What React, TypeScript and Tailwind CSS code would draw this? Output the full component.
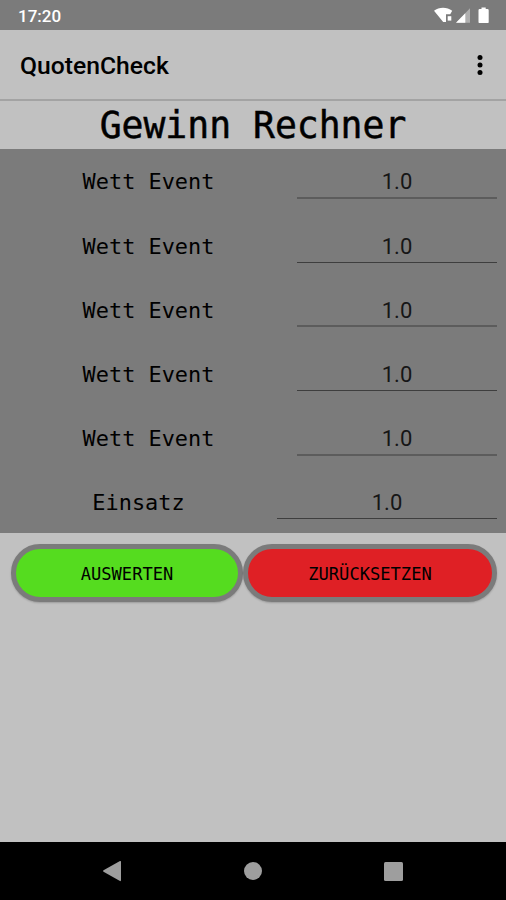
const rows = [
  { label: "Wett Event", line: "h-[50px] w-[200px] border-b-2 border-[#5c5c5c]" },
  { label: "Wett Event", line: "h-[49.5px] w-[200px] border-b-[1.5px] border-[#3e3e3e]" },
  { label: "Wett Event", line: "h-[50px] w-[200px] border-b-2 border-[#5c5c5c]" },
  { label: "Wett Event", line: "h-[49.5px] w-[200px] border-b-[1.5px] border-[#3e3e3e]" },
  { label: "Wett Event", line: "h-[50px] w-[200px] border-b-2 border-[#5c5c5c]" },
  { label: "Einsatz", line: "h-[49.5px] w-[220px] border-b-[1.5px] border-[#3e3e3e]" },
];

function StatusIcons() {
  return (
    <svg width="60" height="20" viewBox="0 0 60 20" fill="#fff">
      {/* Wifi */}
      <path d="M0 4.8C5 .6 13 .6 18.2 4.8L16.2 8.2H12V16H9.2Z" />
      <rect x="13.7" y="10.2" width="3.6" height="4.4" />
      {/* Signal */}
      <path d="M36 2.2V16.8H22Z" opacity=".4" />
      <path d="M31.3 7.2V16.8H22Z" />
      {/* Battery */}
      <path d="M47.5 1.5h4.2v1.6h1.8q1.2 0 1.2 1.2v11.6q0 1.2-1.2 1.2h-7.8q-1.2 0-1.2-1.2V4.3q0-1.2 1.2-1.2h1.8z" />
    </svg>
  );
}

function BetRow({ label, line }: { label: string; line: string }) {
  return (
    <div className="flex h-[64.15px]">
      <div className="flex-1 pl-1 pt-[19.4px] text-center font-['DejaVu_Sans_Mono',monospace] text-[21.9px] leading-7">
        {label}
      </div>
      <div
        className={`ml-1 mr-[9px] pt-[19.4px] text-center text-[22px] leading-7 text-[#161616] ${line}`}
      >
        1.0
      </div>
    </div>
  );
}

export default function App() {
  return (
    <div className="flex h-[900px] w-[506px] flex-col overflow-hidden bg-[#c1c1c1] font-[Roboto,sans-serif] text-black">
      {/* Status bar */}
      <div className="flex h-[30px] shrink-0 items-center justify-between bg-[#7b7b7b] pl-[18px] pr-[12px] pt-0.5">
        <span className="pt-0.5 text-[17px] font-medium text-white">17:20</span>
        <StatusIcons />
      </div>

      {/* App bar */}
      <header className="flex h-[71px] shrink-0 items-center justify-between border-b-2 border-[#a3a3a3] pl-5 pr-[22px] pt-0.5">
        <h1 className="text-[24.7px] font-medium leading-8">QuotenCheck</h1>
        <svg width="8" height="22" viewBox="0 0 8 22">
          <circle cx="4" cy="2.5" r="2.5" />
          <circle cx="4" cy="10" r="2.5" />
          <circle cx="4" cy="17.5" r="2.5" />
        </svg>
      </header>

      <h2 className="h-12 shrink-0 pt-px text-center font-['DejaVu_Sans_Mono',monospace] text-[36.4px] leading-12 [-webkit-text-stroke:0.5px_black]">
        Gewinn Rechner
      </h2>

      <main className="h-96 shrink-0 bg-[#7b7b7b]">
        {rows.map((row, index) => (
          <BetRow key={index} label={row.label} line={row.line} />
        ))}
      </main>

      <div className="flex shrink-0 pl-[11px] pt-[11px] font-['DejaVu_Sans_Mono',monospace] text-[17.1px]">
        <button className="h-[58px] w-[232px] rounded-full border-[5.5px] border-[#7b7b7b] bg-[#55dc1f] pt-[3px] shadow-[0_1px_2px_#0003]">
          AUSWERTEN
        </button>
        <button className="h-[58px] w-[254px] rounded-full border-[5.5px] border-[#7b7b7b] bg-[#df2025] pt-[3px] shadow-[0_1px_2px_#0003]">
          ZURÜCKSETZEN
        </button>
      </div>

      {/* Navigation bar */}
      <nav className="mt-auto flex h-[58px] shrink-0 items-center justify-between bg-black pl-[102px] pr-[103px]">
        <svg width="20" height="22" viewBox="0 0 20 22" fill="#9e9e9e">
          <path d="M18 1Q19 .5 19 2V20Q19 21.5 18 21L1.5 11.8Q.5 11 1.5 10.2Z" />
        </svg>
        <div className="size-[18px] rounded-full bg-[#9e9e9e]" />
        <div className="size-[19px] rounded-[1.5px] bg-[#9e9e9e]" />
      </nav>
    </div>
  );
}
